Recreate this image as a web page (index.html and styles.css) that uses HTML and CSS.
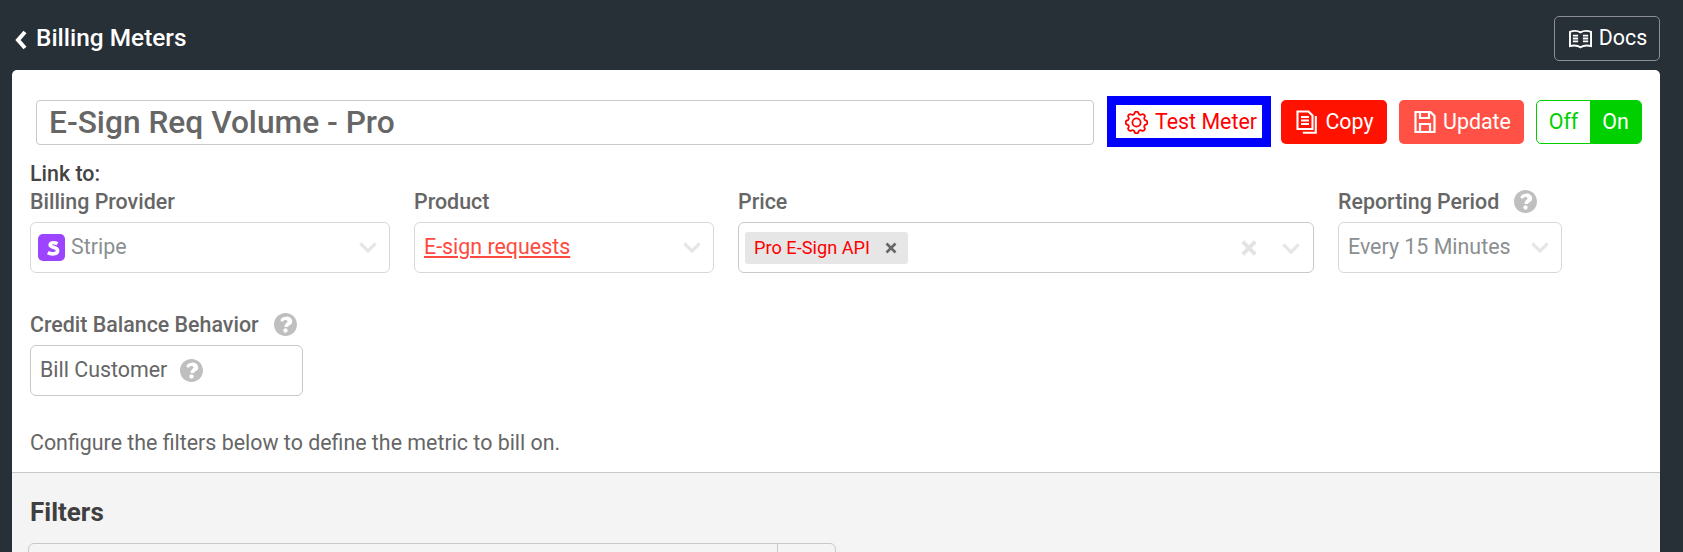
FILE: index.html
```html
<!DOCTYPE html>
<html lang="en">
<head>
    <meta charset="UTF-8">
    <meta name="viewport" content="width=device-width, initial-scale=1.0">
    <title>Billing Meters</title>
    <link rel="stylesheet" href="styles.css">
</head>
<body>
    <svg class="defs" width="0" height="0">
        <symbol id="help" viewBox="8 8 496 496">
            <path d="M504 256c0 136.997-111.043 248-248 248S8 392.997 8 256C8 119.083 119.043 8 256 8s248 111.083 248 248zM262.655 90c-54.497 0-89.255 22.957-116.034 63.784-3.469 5.29-2.308 12.424 2.64 16.252l34.079 25.835c5.113 3.88 12.392 2.966 16.4-2.122 17.49-22.247 29.461-35.129 56.13-35.129 20.038 0 44.663 12.891 44.663 32.337 0 14.68-12.127 22.211-31.899 33.272C266.7 237.004 236 254.178 236 296v4c0 6.627 5.373 12 12 12h56c6.627 0 12-5.373 12-12v-1.333c0-28.983 84.707-30.19 84.707-108.667 0-59.1-61.3-104-118.052-104zM256 338c-25.916 0-47 21.084-47 47 0 25.916 21.084 47 47 47s47-21.084 47-47c0-25.916-21.084-47-47-47z"/>
        </symbol>
        <symbol id="chevron" viewBox="0 0 20 12">
            <path d="M1.500 1.500l8.500 8.500 8.500-8.500" fill="none" stroke="currentColor" stroke-width="3.600"/>
        </symbol>
    </svg>

    <header class="topbar">
        <a class="back">
            <svg class="back-icon" viewBox="0 0 12 20"><path d="M10 2L3 10l7 8" fill="none" stroke="currentColor" stroke-width="4"/></svg>
            Billing Meters
        </a>
        <button class="docs-button">
            <svg class="docs-icon" viewBox="0 0 24 20" fill="none" stroke="currentColor">
                <path d="M1 2.500c4-1.400 8-1.200 11 .6 3-1.800 7-2 11-.6v14.800c-4-1-8-.8-11 1.400-3-2.200-7-2.400-11-1.400z" stroke-width="2"/>
                <path d="M4 6.500h5.500M4 9.500h5.500M4 12.500h5.500M14.500 6.500h5.500M14.500 9.500h5.500M14.500 12.500h5.500" stroke-width="1.900"/>
            </svg>
            Docs
        </button>
    </header>

    <main class="card">
        <div class="title-row">
            <input class="title-input" value="E-Sign Req Volume - Pro">
            <button class="btn btn-test">
                <svg class="btn-icon gear-icon" viewBox="2.500 2.500 19 19" fill="none" stroke="currentColor" stroke-width="1.500">
                    <path d="M10.325 4.317c.426 -1.756 2.924 -1.756 3.35 0a1.724 1.724 0 0 0 2.573 1.066c1.543 -.94 3.31 .826 2.37 2.37a1.724 1.724 0 0 0 1.065 2.572c1.756 .426 1.756 2.924 0 3.35a1.724 1.724 0 0 0 -1.066 2.573c.94 1.543 -.826 3.31 -2.37 2.37a1.724 1.724 0 0 0 -2.572 1.065c-.426 1.756 -2.924 1.756 -3.35 0a1.724 1.724 0 0 0 -2.573 -1.066c-1.543 .94 -3.31 -.826 -2.37 -2.37a1.724 1.724 0 0 0 -1.065 -2.572c-1.756 -.426 -1.756 -2.924 0 -3.35a1.724 1.724 0 0 0 1.066 -2.573c-.94 -1.543 .826 -3.31 2.37 -2.37c1 .608 2.296 .07 2.572 -1.065z"/>
                    <circle cx="12" cy="12" r="3.400"/>
                </svg>
                Test Meter
            </button>
            <button class="btn btn-copy">
                <svg class="btn-icon" viewBox="0 0 22 24" fill="none" stroke="currentColor" stroke-width="2.100">
                    <path d="M1.500 1.500h11l4 4v13.500h-15z"/>
                    <path d="M19.800 6v16.800h-13"/>
                    <path d="M5 7h8M5 10.500h8M5 14h8"/>
                </svg>
                Copy
            </button>
            <button class="btn btn-update">
                <svg class="btn-icon" viewBox="0 0 22 24" fill="none" stroke="currentColor" stroke-width="2.200">
                    <path d="M1.500 2h15l4 4v16h-19z"/>
                    <path d="M6 2v6h9V2M6 22v-8h10v8"/>
                </svg>
                Update
            </button>
            <div class="toggle">
                <span class="toggle-off">Off</span>
                <span class="toggle-on">On</span>
            </div>
        </div>

        <div class="form">
            <div class="link-to">Link to:</div>
            <div class="field-row">
                <div class="field field-provider">
                    <label>Billing Provider</label>
                    <div class="select">
                        <span class="stripe-logo">
                            <svg viewBox="0 0 27 27"><path d="M19.500 9.800c-2.700-1.500-7.300-1.500-7.300 1.200 0 2.900 7.400 1.700 7.400 5.700 0 3.500-6 4-9.800 2" fill="none" stroke="white" stroke-width="3.600"/></svg>
                        </span>
                        <span class="select-text">Stripe</span>
                        <svg class="chevron"><use href="#chevron"/></svg>
                    </div>
                </div>
                <div class="field field-product">
                    <label>Product</label>
                    <div class="select">
                        <a class="product-link">E-sign requests</a>
                        <svg class="chevron"><use href="#chevron"/></svg>
                    </div>
                </div>
                <div class="field field-price">
                    <label>Price</label>
                    <div class="select select-multi">
                        <span class="tag">Pro E-Sign API<svg class="tag-x" viewBox="0 0 12 12"><path d="M1.500 1.500l9 9M10.500 1.500l-9 9" stroke="currentColor" stroke-width="2.600"/></svg></span>
                        <svg class="clear-x" viewBox="0 0 14 14"><path d="M1.500 1.500l11 11M12.500 1.500l-11 11" stroke="currentColor" stroke-width="3.400"/></svg>
                        <svg class="chevron chevron-price"><use href="#chevron"/></svg>
                    </div>
                </div>
                <div class="field field-period">
                    <label>Reporting Period <svg class="help help-label"><use href="#help"/></svg></label>
                    <div class="select">
                        <span class="select-text">Every 15 Minutes</span>
                        <svg class="chevron"><use href="#chevron"/></svg>
                    </div>
                </div>
            </div>

            <div class="field field-credit">
                <label>Credit Balance Behavior <svg class="help help-label"><use href="#help"/></svg></label>
                <div class="select">
                    <span class="credit-text">Bill Customer</span>
                    <svg class="help help-inline"><use href="#help"/></svg>
                </div>
            </div>

            <p class="hint">Configure the filters below to define the metric to bill on.</p>
        </div>

        <section class="filters">
            <h2>Filters</h2>
            <div class="filter-box">
                <div class="filter-main"></div>
                <div class="filter-side"></div>
            </div>
        </section>
    </main>
</body>
</html>
```

FILE: styles.css
```css
html, body {
    height: 552px;
    overflow: hidden;
}
body {
    margin: 0;
    background: #272f37;
    color: #666;
    font-family: Roboto, "Liberation Sans", sans-serif;
}
.defs {
    display: block;
    height: 0;
}
.topbar {
    height: 70px;
    display: flex;
    align-items: flex-start;
    justify-content: space-between;
    padding: 0 23px 0 15px;
    box-sizing: border-box;
}
.back {
    display: flex;
    align-items: center;
    gap: 9px;
    margin-top: 21px;
    height: 32px;
    color: white;
    font-size: 24.4px;
    font-weight: 500;
}
.back-icon {
    width: 12px;
    height: 20px;
    margin-top: 5px;
}
.docs-button {
    display: flex;
    align-items: center;
    justify-content: center;
    gap: 7px;
    width: 106px;
    height: 45px;
    margin-top: 16px;
    padding: 0 0 2px 2px;
    background: transparent;
    color: white;
    border: 1px solid #8d8f92;
    border-radius: 5px;
    font-family: inherit;
    font-size: 21.4px;
}
.docs-icon {
    width: 23px;
    height: 20px;
    margin-top: 2px;
}
.card {
    margin: 0 23px 0 12px;
    height: 482px;
    background: white;
    border-radius: 5px 5px 0 0;
    overflow: hidden;
}

/* top row */
.title-row {
    display: flex;
    align-items: flex-start;
    padding: 30px 0 0 24px;
}
.title-input {
    width: 1058px;
    height: 45px;
    box-sizing: border-box;
    padding: 0 12px;
    border: 1px solid #c5cacd;
    border-radius: 4px;
    color: #666;
    font-family: inherit;
    font-size: 31.7px;
    font-weight: 500;
    outline: none;
}
.btn {
    display: flex;
    align-items: center;
    justify-content: center;
    gap: 7px;
    height: 44px;
    padding: 0 0 2px 2px;
    border: none;
    border-radius: 5px;
    color: white;
    font-family: inherit;
    font-size: 21.4px;
}
.btn-icon {
    width: 22px;
    height: 24px;
    margin-top: 2px;
}
.gear-icon {
    width: 23px;
    height: 23px;
}
.btn-test {
    width: 146px;
    height: 33px;
    margin: 5px 0 0 22px;
    padding: 0 0 1px 4px;
    border-radius: 0;
    background: white;
    color: #ff0000;
    outline: 9px solid #0000ff;
}
.btn-copy {
    width: 106px;
    margin-left: 19px;
    background: #ff1200;
}
.btn-update {
    width: 125px;
    margin-left: 12px;
    background: #ff5145;
}
.toggle {
    display: flex;
    width: 106px;
    height: 44px;
    margin-left: 12px;
    box-sizing: border-box;
    border: 1px solid #00d000;
    border-radius: 5px;
    overflow: hidden;
    font-size: 21.4px;
}
.toggle span {
    display: flex;
    align-items: center;
    justify-content: center;
    padding-bottom: 2px;
}
.toggle-off {
    flex: 0 0 53px;
    color: #00d000;
}
.toggle-on {
    flex: 1;
    background: #00d000;
    color: white;
}

/* form */
.form {
    padding: 0 18px;
}
.link-to {
    margin-top: 18px;
    height: 22px;
    line-height: 22px;
    color: #444;
    font-size: 21.4px;
    font-weight: 500;
}
.field-row {
    display: flex;
    gap: 24px;
    margin-top: 4px;
}
.field label {
    display: flex;
    align-items: center;
    height: 24px;
    margin-bottom: 9px;
    font-size: 21.4px;
    font-weight: 500;
}
.field-provider { width: 360px; }
.field-product { width: 300px; }
.field-price { width: 576px; }
.field-period { width: 224px; }
.field-credit {
    width: 273px;
    margin-top: 39px;
}
.select {
    display: flex;
    align-items: center;
    height: 51px;
    box-sizing: border-box;
    padding: 0 9px 2px;
    border: 1px solid #d5d9db;
    border-radius: 6px;
    font-size: 21.4px;
}
.select-multi {
    padding: 0 6px;
    border-color: #c5cacd;
}
.field-credit .select {
    border-color: #c5cacd;
}
.select-text {
    color: #8a8f91;
}
.stripe-logo {
    width: 27px;
    height: 27px;
    margin: 2px 6px 0 -2px;
    background: #9c44ff;
    border-radius: 5px;
}
.stripe-logo svg {
    display: block;
}
.product-link {
    color: #ff4a40;
    text-decoration: underline;
}
.chevron {
    width: 18px;
    height: 11px;
    margin: 2px 3px 0 auto;
    color: #e6e6e6;
}
.chevron-price {
    margin-left: 25px;
    margin-right: 7px;
}
.tag {
    display: flex;
    align-items: center;
    height: 32px;
    padding: 0 11px 0 9px;
    background: #e6e6e6;
    border-radius: 3px;
    color: #ff0000;
    font-size: 18.2px;
}
.tag-x {
    width: 12px;
    height: 12px;
    margin-left: 15px;
    color: #666;
}
.clear-x {
    width: 16px;
    height: 16px;
    margin-left: auto;
    color: #e3e3e3;
}
.help {
    fill: #bfbfbf;
    width: 23px;
    height: 23px;
}
.help-label {
    margin-left: 15px;
}
.credit-text {
    color: #666;
}
.help-inline {
    margin: 2px 0 0 13px;
}
.hint {
    margin: 33px 0 0;
    height: 28px;
    line-height: 28px;
    font-size: 21.4px;
}

/* filters */
.filters {
    margin-top: 15px;
    height: 120px;
    padding: 24px 16px 0 18px;
    background: #f4f4f4;
    border-top: 1px solid #c5cacd;
}
.filters h2 {
    margin: 0;
    height: 30px;
    line-height: 30px;
    color: #3f3f3f;
    font-size: 26px;
    font-weight: 700;
}
.filter-box {
    display: flex;
    width: 806px;
    height: 60px;
    margin: 16px 0 0 -2px;
    border: 1px solid #c5cacd;
    border-radius: 6px;
}
.filter-main {
    width: 748px;
    border-right: 1px solid #c5cacd;
}
```
